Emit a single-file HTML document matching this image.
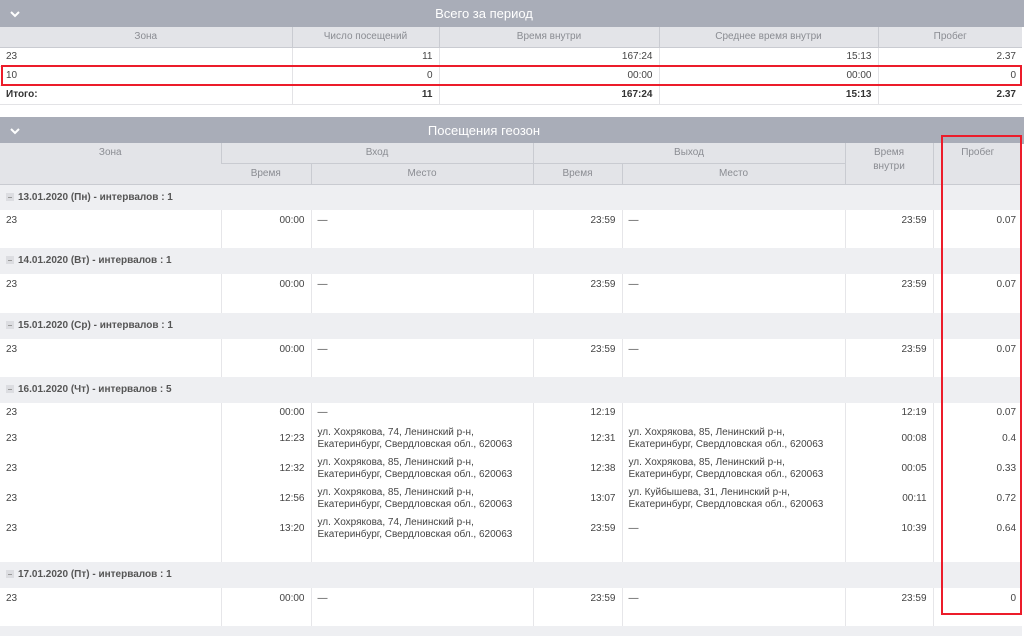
<!DOCTYPE html>
<html><head><meta charset="utf-8"><style>
*{margin:0;padding:0;box-sizing:border-box}
body{width:1024px;height:630px;overflow:hidden;background:#fff;font-family:"Liberation Sans",sans-serif;font-size:10px;color:#444;position:relative}
.bar{position:absolute;left:0;width:1024px;height:27px;background:#a9adb8;color:#fff;font-size:13px;line-height:27px}
.bar .t{position:absolute;left:0;width:968px;text-align:center}
.bar svg{position:absolute;left:9px;top:9px}
table{position:absolute;left:0;border-collapse:collapse;table-layout:fixed;width:1022px}
td,th{overflow:hidden;white-space:nowrap;padding:0 6px;font-weight:normal}
th{background:#e3e4e8;color:#8a8c92;border-left:1px solid #c9cbd1;border-bottom:1px solid #c9cbd1;text-align:center;vertical-align:top}
th:first-child{border-left:none}
.t1 td{height:19px;border-left:1px solid #e3e3e6;border-bottom:1px solid #e3e3e6;line-height:18px}
.t1 td:first-child{border-left:none}
.r{text-align:right}
.b td{font-weight:bold;color:#333}
.g td{background:#eeeff2;height:26px;font-weight:bold;color:#555;padding-left:6px;line-height:26px;border:none}
.g i{display:inline-block;width:8px;height:8px;background:#dcdde1;vertical-align:-1px;margin-right:4px;position:relative}
.g i:after{content:"";position:absolute;left:2px;top:3.5px;width:4px;height:1px;background:#999}
.t2 .d td{border-left:1px solid #e6e6e9;vertical-align:top;line-height:12px;padding-top:5px;white-space:normal}
.t2 .d td:first-child{border-left:none}
.red{position:absolute;border:2px solid #ec1c2a}
</style></head><body>
<div class="bar" style="top:0"><svg width="12" height="10" viewBox="0 0 12 10"><path d="M2 3l4 4 4-4" stroke="#fff" stroke-width="2" fill="none"/></svg><span class="t">Всего за период</span></div>
<table class="t1" style="top:27px">
<colgroup><col style="width:292px"><col style="width:147px"><col style="width:220px"><col style="width:219px"><col style="width:144px"></colgroup>
<tr><th style="height:20px;line-height:20px">Зона</th><th style="line-height:20px">Число посещений</th><th style="line-height:20px">Время внутри</th><th style="line-height:20px">Среднее время внутри</th><th style="line-height:20px">Пробег</th></tr>
<tr><td>23</td><td class="r">11</td><td class="r">167:24</td><td class="r">15:13</td><td class="r">2.37</td></tr>
<tr><td>10</td><td class="r">0</td><td class="r">00:00</td><td class="r">00:00</td><td class="r">0</td></tr>
<tr class="b"><td>Итого:</td><td class="r">11</td><td class="r">167:24</td><td class="r">15:13</td><td class="r">2.37</td></tr>
</table>
<div class="red" style="left:1px;top:65px;width:1021px;height:21px"></div>
<div class="bar" style="top:117px"><svg width="12" height="10" viewBox="0 0 12 10"><path d="M2 3l4 4 4-4" stroke="#fff" stroke-width="2" fill="none"/></svg><span class="t">Посещения геозон</span></div>
<table class="t2" style="top:143px">
<colgroup><col style="width:221px"><col style="width:90px"><col style="width:222px"><col style="width:89px"><col style="width:223px"><col style="width:88px"><col style="width:89px"></colgroup>
<tr><th rowspan="2" style="height:41px;padding-top:4px">Зона</th><th colspan="2" style="height:20px;line-height:20px">Вход</th><th colspan="2" style="line-height:20px">Выход</th><th rowspan="2" style="padding-top:3px;line-height:14px">Время<br>внутри</th><th rowspan="2" style="padding-top:4px">Пробег</th></tr>
<tr><th style="height:21px;line-height:20px">Время</th><th style="line-height:20px">Место</th><th style="line-height:20px">Время</th><th style="line-height:20px">Место</th></tr>
<tr class="g"><td colspan="7" style="height:25px;line-height:25px"><i></i>13.01.2020 (Пн) - интервалов : 1</td></tr>
<tr class="d"><td style="height:38px">23</td><td class="r">00:00</td><td>—</td><td class="r">23:59</td><td>—</td><td class="r">23:59</td><td class="r">0.07</td></tr>
<tr class="g"><td colspan="7"><i></i>14.01.2020 (Вт) - интервалов : 1</td></tr>
<tr class="d"><td style="height:39px">23</td><td class="r">00:00</td><td>—</td><td class="r">23:59</td><td>—</td><td class="r">23:59</td><td class="r">0.07</td></tr>
<tr class="g"><td colspan="7"><i></i>15.01.2020 (Ср) - интервалов : 1</td></tr>
<tr class="d"><td style="height:38px">23</td><td class="r">00:00</td><td>—</td><td class="r">23:59</td><td>—</td><td class="r">23:59</td><td class="r">0.07</td></tr>
<tr class="g"><td colspan="7"><i></i>16.01.2020 (Чт) - интервалов : 5</td></tr>
<tr class="d"><td style="height:22px;padding-top:4px">23</td><td class="r" style="padding-top:4px">00:00</td><td style="padding-top:4px">—</td><td class="r" style="padding-top:4px">12:19</td><td></td><td class="r" style="padding-top:4px">12:19</td><td class="r" style="padding-top:4px">0.07</td></tr>
<tr class="d"><td style="height:30px;padding-top:8px">23</td><td class="r" style="padding-top:8px">12:23</td><td style="padding-top:2px">ул. Хохрякова, 74, Ленинский р-н,<br>Екатеринбург, Свердловская обл., 620063</td><td class="r" style="padding-top:8px">12:31</td><td style="padding-top:2px">ул. Хохрякова, 85, Ленинский р-н,<br>Екатеринбург, Свердловская обл., 620063</td><td class="r" style="padding-top:8px">00:08</td><td class="r" style="padding-top:8px">0.4</td></tr>
<tr class="d"><td style="height:30px;padding-top:8px">23</td><td class="r" style="padding-top:8px">12:32</td><td style="padding-top:2px">ул. Хохрякова, 85, Ленинский р-н,<br>Екатеринбург, Свердловская обл., 620063</td><td class="r" style="padding-top:8px">12:38</td><td style="padding-top:2px">ул. Хохрякова, 85, Ленинский р-н,<br>Екатеринбург, Свердловская обл., 620063</td><td class="r" style="padding-top:8px">00:05</td><td class="r" style="padding-top:8px">0.33</td></tr>
<tr class="d"><td style="height:30px;padding-top:8px">23</td><td class="r" style="padding-top:8px">12:56</td><td style="padding-top:2px">ул. Хохрякова, 85, Ленинский р-н,<br>Екатеринбург, Свердловская обл., 620063</td><td class="r" style="padding-top:8px">13:07</td><td style="padding-top:2px">ул. Куйбышева, 31, Ленинский р-н,<br>Екатеринбург, Свердловская обл., 620063</td><td class="r" style="padding-top:8px">00:11</td><td class="r" style="padding-top:8px">0.72</td></tr>
<tr class="d"><td style="height:47px;padding-top:8px">23</td><td class="r" style="padding-top:8px">13:20</td><td style="padding-top:2px">ул. Хохрякова, 74, Ленинский р-н,<br>Екатеринбург, Свердловская обл., 620063</td><td class="r" style="padding-top:8px">23:59</td><td style="padding-top:8px">—</td><td class="r" style="padding-top:8px">10:39</td><td class="r" style="padding-top:8px">0.64</td></tr>
<tr class="g"><td colspan="7"><i></i>17.01.2020 (Пт) - интервалов : 1</td></tr>
<tr class="d"><td style="height:38px">23</td><td class="r">00:00</td><td>—</td><td class="r">23:59</td><td>—</td><td class="r">23:59</td><td class="r">0</td></tr>
<tr class="g"><td colspan="7" style="height:10px"></td></tr>
</table>
<div class="red" style="left:941px;top:135px;width:81px;height:480px"></div>
</body></html>
